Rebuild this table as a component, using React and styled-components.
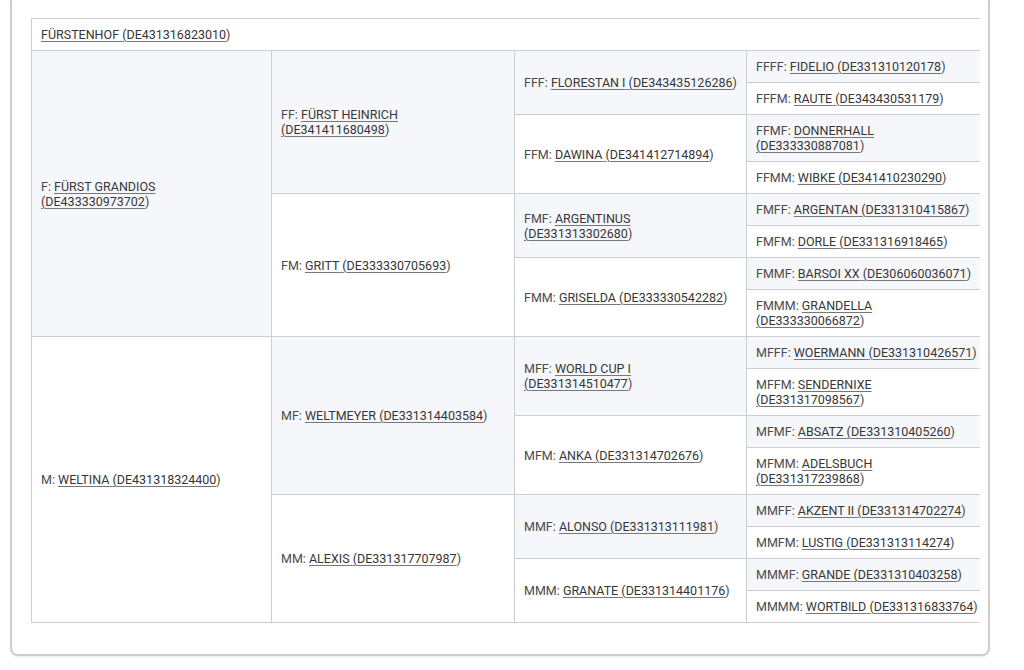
import React from "react";
import styled, { createGlobalStyle } from "styled-components";

const Global = createGlobalStyle`
  html, body { margin: 0; padding: 0; background: #ffffff; }
  body { font-family: Roboto, "Liberation Sans", Arial, sans-serif; }
`;

const Page = styled.div`
  padding: 0 34px 0 10px;
  height: 670px;
  box-sizing: border-box;
`;

const Card = styled.div`
  background: #fff;
  border: 2px solid #cdcdcd;
  border-top: none;
  border-radius: 0 0 8px 8px;
  box-shadow: 0 1px 2px rgba(0, 0, 0, 0.08);
  padding: 18px 8px 31px 19px;
  box-sizing: border-box;
`;

const Scroller = styled.div`
  overflow: hidden;
`;

const Table = styled.table`
  border-collapse: collapse;
  table-layout: fixed;
  width: 965px;
  font-size: 12.5px;
  line-height: 15px;
  color: #454545;
`;

const Col = styled.col`
  width: ${(p) => p.$w}px;
`;

const Cell = styled.td`
  border: 1px solid #cbced3;
  padding: 8px 10px 8px 9px;
  vertical-align: middle;
  white-space: nowrap;
  background: ${(p) => (p.$shaded ? "#f6f7fb" : "#ffffff")};
`;

const Label = styled.span`
  color: #4a4a4a;
`;

const Link = styled.a`
  color: #363636;
  text-decoration: underline;
  text-decoration-color: #777;
  text-underline-offset: 2px;
  cursor: pointer;
`;

const Entry = ({ code, name, id, wrap }) => (
  <>
    {code && <Label>{code}: </Label>}
    <Link>
      {name}
      {wrap ? <br /> : " "}({id}
    </Link>
    )
  </>
);

const data = {
  F: ["FÜRST GRANDIOS", "DE433330973702", true],
  M: ["WELTINA", "DE431318324400"],
  FF: ["FÜRST HEINRICH", "DE341411680498", true],
  FM: ["GRITT", "DE333330705693"],
  MF: ["WELTMEYER", "DE331314403584"],
  MM: ["ALEXIS", "DE331317707987"],
  FFF: ["FLORESTAN I", "DE343435126286"],
  FFM: ["DAWINA", "DE341412714894"],
  FMF: ["ARGENTINUS", "DE331313302680", true],
  FMM: ["GRISELDA", "DE333330542282"],
  MFF: ["WORLD CUP I", "DE331314510477", true],
  MFM: ["ANKA", "DE331314702676"],
  MMF: ["ALONSO", "DE331313111981"],
  MMM: ["GRANATE", "DE331314401176"],
  FFFF: ["FIDELIO", "DE331310120178"],
  FFFM: ["RAUTE", "DE343430531179"],
  FFMF: ["DONNERHALL", "DE333330887081", true],
  FFMM: ["WIBKE", "DE341410230290"],
  FMFF: ["ARGENTAN", "DE331310415867"],
  FMFM: ["DORLE", "DE331316918465"],
  FMMF: ["BARSOI XX", "DE306060036071"],
  FMMM: ["GRANDELLA", "DE333330066872", true],
  MFFF: ["WOERMANN", "DE331310426571"],
  MFFM: ["SENDERNIXE", "DE331317098567", true],
  MFMF: ["ABSATZ", "DE331310405260"],
  MFMM: ["ADELSBUCH", "DE331317239868", true],
  MMFF: ["AKZENT II", "DE331314702274"],
  MMFM: ["LUSTIG", "DE331313114274"],
  MMMF: ["GRANDE", "DE331310403258"],
  MMMM: ["WORTBILD", "DE331316833764"],
};

const codeFor = (index, depth) => {
  let s = "";
  for (let b = depth - 1; b >= 0; b--) s += (index >> b) & 1 ? "M" : "F";
  return s;
};

const PedCell = ({ depth, index }) => {
  const code = codeFor(index, depth);
  const [name, id, wrap] = data[code];
  const span = 16 >> depth;
  return (
    <Cell rowSpan={span} $shaded={index % 2 === 0}>
      <Entry code={code} name={name} id={id} wrap={wrap} />
    </Cell>
  );
};

export default function App() {
  const rows = [];
  for (let r = 0; r < 16; r++) {
    const cells = [];
    for (let depth = 1; depth <= 4; depth++) {
      const span = 16 >> depth;
      if (r % span === 0) {
        cells.push(<PedCell key={depth} depth={depth} index={r / span} />);
      }
    }
    rows.push(<tr key={r}>{cells}</tr>);
  }
  return (
    <>
      <Global />
      <Page>
        <Card>
          <Scroller>
            <Table>
              <colgroup>
                <Col $w={240} />
                <Col $w={243} />
                <Col $w={232} />
                <Col $w={250} />
              </colgroup>
              <tbody>
                <tr>
                  <Cell colSpan={4}>
                    <Entry name="FÜRSTENHOF" id="DE431316823010" />
                  </Cell>
                </tr>
                {rows}
              </tbody>
            </Table>
          </Scroller>
        </Card>
      </Page>
    </>
  );
}
